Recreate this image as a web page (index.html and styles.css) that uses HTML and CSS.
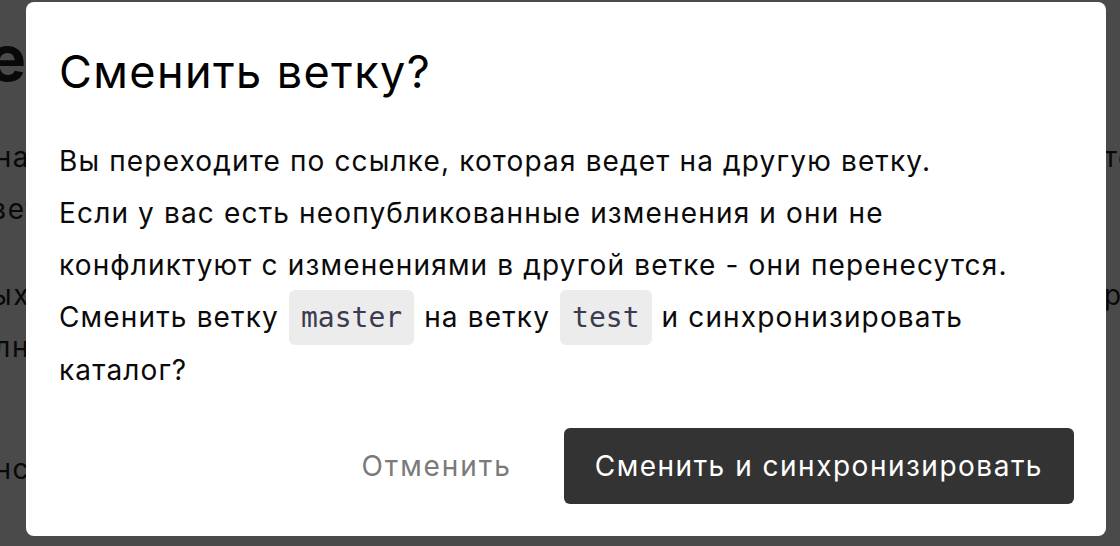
FILE: index.html
```html
<!DOCTYPE html>
<html lang="ru">
<head>
<meta charset="utf-8">
<title>Сменить ветку?</title>
<link rel="stylesheet" href="styles.css">
</head>
<body>
<div class="page">
  <div class="page-row page-head"><span class="frag-left"><span>Ветке</span></span><span class="frag-right"></span></div>
  <div class="page-row r1"><span class="frag-left"><span>на</span></span><span class="frag-right"><span>те</span></span></div>
  <div class="page-row r2"><span class="frag-left frag-wide"><span>вет</span></span><span class="frag-right"></span></div>
  <div class="page-row r3"><span class="frag-left"><span>ых</span></span><span class="frag-right"><span>р</span></span></div>
  <div class="page-row r4"><span class="frag-left"><span>лн</span></span><span class="frag-right"></span></div>
  <div class="page-row r5"><span class="frag-left"><span>нс</span></span><span class="frag-right"></span></div>
</div>
<div class="overlay">
  <div class="modal" role="dialog">
    <h2 class="modal-title">Сменить ветку?</h2>
    <p class="modal-text">Вы переходите по ссылке, которая ведет на другую ветку.<br>Если у вас есть неопубликованные изменения и они не конфликтуют с изменениями в другой ветке - они перенесутся.<br>Сменить ветку <code class="branch">master</code> на ветку <code class="branch">test</code> и синхронизировать каталог?</p>
    <div class="modal-actions">
      <button class="btn btn-cancel">Отменить</button>
      <button class="btn btn-primary">Сменить и синхронизировать</button>
    </div>
  </div>
</div>
</body>
</html>
```
FILE: styles.css
```css
* { box-sizing: border-box; }
html, body { margin: 0; padding: 0; }
body {
  width: 1120px;
  height: 546px;
  overflow: hidden;
  background: #ffffff;
  font-family: Inter, "Noto Sans", "Liberation Sans", sans-serif;
  color: #111;
}

/* background page (dimmed by the overlay) */
.page {
  width: 1136px;
  padding-top: 22px;
  color: #222;
}
.page-row {
  display: flex;
  justify-content: space-between;
  font-size: 28px;
  line-height: 34px;
  letter-spacing: 1.5px;
  white-space: nowrap;
}
.frag-left {
  width: 30px;
  display: flex;
  justify-content: flex-end;
}
.frag-left.frag-wide { width: 40px; }
.frag-right {
  width: 32px;
  display: flex;
  justify-content: flex-start;
}
.page-head {
  font-size: 64px;
  line-height: 72px;
  font-weight: 700;
  letter-spacing: 0;
}
.page-head .frag-left { width: 26px; }
.r1 { margin-top: 46px; }
.r2 { margin-top: 18px; }
.r3 { margin-top: 52px; }
.r4 { margin-top: 18px; }
.r5 { margin-top: 88px; }

/* overlay + dialog */
.overlay {
  position: fixed;
  inset: 0;
  background: rgba(0, 0, 0, 0.71);
  display: flex;
  justify-content: center;
  align-items: flex-start;
  padding: 2px 0 0 12px;
}
.modal {
  width: 1080px;
  background: #fff;
  border-radius: 8px;
  padding: 32px 32px 32px 33px;
}
.modal-title {
  margin: 10px 0 0;
  font-size: 45px;
  font-weight: 400;
  line-height: 56px;
  letter-spacing: 1.4px;
  color: #000;
}
.modal-text {
  margin: 35px 0 0;
  max-width: 1010px;
  font-size: 28px;
  line-height: 52px;
  letter-spacing: 1.15px;
  color: #0a0a0a;
}
.branch {
  font-family: "DejaVu Sans Mono", "Liberation Mono", monospace;
  font-size: 28px;
  letter-spacing: 0;
  color: #3b3b4f;
  background: #ececec;
  border-radius: 6px;
  padding: 11px 12px;
  margin: 0 1px;
}
.modal-actions {
  margin-top: 32px;
  display: flex;
  justify-content: flex-end;
  align-items: center;
  gap: 52px;
}
.btn {
  font-family: inherit;
  font-size: 28px;
  letter-spacing: 1.5px;
  border: none;
  cursor: pointer;
}
.btn-cancel {
  background: none;
  color: #7a7a7a;
  padding: 0;
  letter-spacing: 1.9px;
}
.btn-primary {
  background: #333333;
  color: #fff;
  border-radius: 6px;
  height: 76px;
  padding: 0 31px;
}
```
